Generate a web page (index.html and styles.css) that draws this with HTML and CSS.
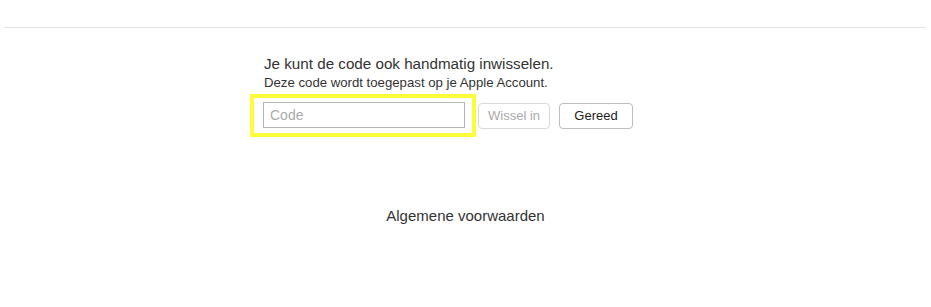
FILE: index.html
```html
<!DOCTYPE html>
<html>
<head>
	<meta charset="utf-8">
	<title>Code inwisselen</title>
	<link rel="stylesheet" href="styles.css">
</head>
<body>
	<div class="topbar"></div>
	<div class="redeem">
		<p class="title">Je kunt de code ook handmatig inwisselen.</p>
		<p class="sub">Deze code wordt toegepast op je Apple Account.</p>
		<div class="row">
			<div class="highlight">
				<input class="code" type="text" placeholder="Code">
			</div>
			<button class="btn" disabled>Wissel in</button>
			<button class="btn done">Gereed</button>
		</div>
	</div>
	<div class="terms">Algemene voorwaarden</div>
</body>
</html>
```

FILE: styles.css
```css
*{margin: 0;padding: 0;box-sizing: border-box;}
body {
	font-family: "Liberation Sans", Arial, sans-serif;
	color: #333;
	background: #fff;
}
.topbar {
	height: 28px;
	margin: 0 5px 0 4px;
	border-bottom: 1px solid #e3e3e3;
}
.redeem {
	width: 403px;
	margin: 0 auto;
	padding-top: 27px;
}
.title {
	font-size: 15.2px;
	line-height: 18px;
}
.sub {
	font-size: 13.2px;
	line-height: 16px;
	margin-top: 2px;
}
.row {
	display: flex;
	align-items: center;
	margin-left: -14px;
	margin-top: 3px;
}
.highlight {
	border: 4px solid #fdfd3a;
	padding: 4px 7px 5px 9px;
}
.code {
	display: block;
	width: 202px;
	height: 26px;
	border: 1px solid #b5b5b5;
	padding: 0 6px;
	font: 14px "Liberation Sans", Arial, sans-serif;
	color: #333;
	outline: none;
}
.code::placeholder {
	color: #aaa;
}
.btn {
	height: 26px;
	padding: 0 9px;
	margin-left: 2px;
	border: 1px solid #dadada;
	border-radius: 4px;
	background: #fff;
	font: 13px "Liberation Sans", Arial, sans-serif;
	color: #aaa;
}
.btn.done {
	margin-left: 9px;
	width: 74px;
	border-color: #bdbdbd;
	color: #222;
}
.terms {
	text-align: center;
	font-size: 15px;
	margin-top: 70px;
}
```
